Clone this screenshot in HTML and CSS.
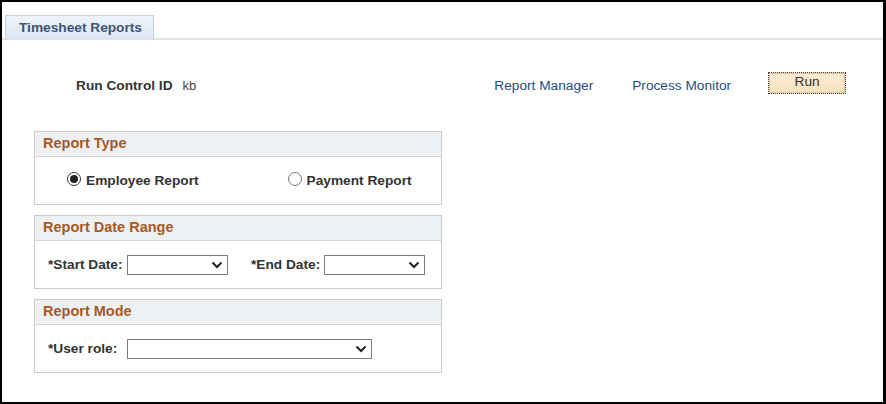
FILE: index.html
```html
<!DOCTYPE html>
<html lang="en">
<head>
    <meta charset="UTF-8">
    <title>Timesheet Reports</title>
    <link rel="stylesheet" href="styles.css">
</head>
<body>
    <div class="frame">
        <div class="tab-bar">
            <div class="tab">Timesheet Reports</div>
        </div>

        <div class="toolbar">
            <span class="run-label">Run Control ID</span>
            <span class="run-value">kb</span>
            <a class="link link-manager" href="#">Report Manager</a>
            <a class="link link-monitor" href="#">Process Monitor</a>
            <button class="run-btn" type="button">Run</button>
        </div>

        <div class="group">
            <div class="group-title">Report Type</div>
            <div class="group-body type-body">
                <label class="radio radio-employee"><span class="dot checked"></span>Employee Report</label>
                <label class="radio radio-payment"><span class="dot"></span>Payment Report</label>
            </div>
        </div>

        <div class="group">
            <div class="group-title">Report Date Range</div>
            <div class="group-body">
                <span class="field-label">*Start Date:</span>
                <div class="select select-date">
                    <svg width="12" height="8" viewBox="0 0 12 8"><path d="M1.5 1.5 L6 6 L10.5 1.5" fill="none" stroke="#222" stroke-width="2"/></svg>
                </div>
                <span class="field-label end-label">*End Date:</span>
                <div class="select select-date">
                    <svg width="12" height="8" viewBox="0 0 12 8"><path d="M1.5 1.5 L6 6 L10.5 1.5" fill="none" stroke="#222" stroke-width="2"/></svg>
                </div>
            </div>
        </div>

        <div class="group">
            <div class="group-title">Report Mode</div>
            <div class="group-body">
                <span class="field-label">*User role:</span>
                <div class="select select-role">
                    <svg width="12" height="8" viewBox="0 0 12 8"><path d="M1.5 1.5 L6 6 L10.5 1.5" fill="none" stroke="#222" stroke-width="2"/></svg>
                </div>
            </div>
        </div>
    </div>
</body>
</html>
```
FILE: styles.css
```css
body {
    margin: 0;
    font-family: 'Liberation Sans', Arial, sans-serif;
    color: #333;
    background: #000;
}

.frame {
    box-sizing: border-box;
    width: 886px;
    height: 404px;
    border-style: solid;
    border-color: #000;
    border-width: 2px 3px 2px 2px;
    background: #fff;
    overflow: hidden;
}

.tab-bar {
    margin-top: 13px;
    padding-left: 3px;
    display: flex;
    border-bottom: 2px solid #dfe6ea;
    height: 23px;
}

.tab {
    box-sizing: border-box;
    width: 149px;
    height: 25px;
    padding: 4px 0 0 13px;
    font-size: 13.7px;
    font-weight: bold;
    color: #3e5573;
    background: linear-gradient(#eef3f9, #dce6f1);
    border: 1px solid #c7d1dc;
    border-bottom: none;
}

.toolbar {
    display: flex;
    align-items: flex-end;
    margin-top: 32px;
    padding-left: 74px;
    height: 22px;
}

.run-label {
    font-size: 13.7px;
    font-weight: bold;
    line-height: 16px;
}

.run-value {
    margin-left: 10px;
    font-size: 13px;
    line-height: 16px;
    color: #444;
}

.link {
    font-size: 13.7px;
    line-height: 16px;
    color: #284c7a;
    text-decoration: none;
}

.link-manager {
    margin-left: 298px;
}

.link-monitor {
    margin-left: 39px;
}

.run-btn {
    box-sizing: border-box;
    margin-left: 37px;
    width: 78px;
    height: 22px;
    padding: 0 0 3px;
    font-family: inherit;
    font-size: 13.7px;
    color: #333;
    background: linear-gradient(#fcecd4, #f7e0bd);
    border: 1px dotted #444;
    outline: 1px solid #d7c6a8;
    outline-offset: -2px;
}

.group {
    box-sizing: border-box;
    width: 408px;
    margin-left: 32px;
    border: 1px solid #cbcbcb;
    margin-top: 10px;
}

.toolbar + .group {
    margin-top: 37px;
}

.group-title {
    height: 24px;
    line-height: 23px;
    padding-left: 8px;
    font-size: 14.5px;
    font-weight: bold;
    color: #a7591f;
    background: #eef1f4;
    border-bottom: 1px solid #d2d5d8;
}

.group-body {
    display: flex;
    align-items: center;
    height: 47px;
    padding-left: 13px;
    font-size: 13.7px;
}

.type-body {
    padding-left: 32px;
}

.radio {
    display: flex;
    align-items: center;
    font-weight: bold;
}

.radio-payment {
    margin-left: 89px;
}

.dot {
    box-sizing: border-box;
    width: 14px;
    height: 14px;
    margin-right: 5px;
    margin-top: -3px;
    border: 1px solid #777;
    border-radius: 50%;
    background: #fff;
    display: flex;
    align-items: center;
    justify-content: center;
}

.dot.checked {
    border-color: #333;
}

.dot.checked::after {
    content: '';
    width: 8px;
    height: 8px;
    border-radius: 50%;
    background: #222;
}

.field-label {
    font-weight: bold;
    width: 79px;
}

.end-label {
    margin-left: 23px;
    width: 73px;
}

.select {
    box-sizing: border-box;
    height: 20px;
    border: 1px solid #7a7a7a;
    display: flex;
    align-items: center;
    justify-content: flex-end;
    padding-right: 4px;
    background: #fff;
}

.select-date {
    width: 101px;
}

.select-role {
    width: 245px;
}
```
